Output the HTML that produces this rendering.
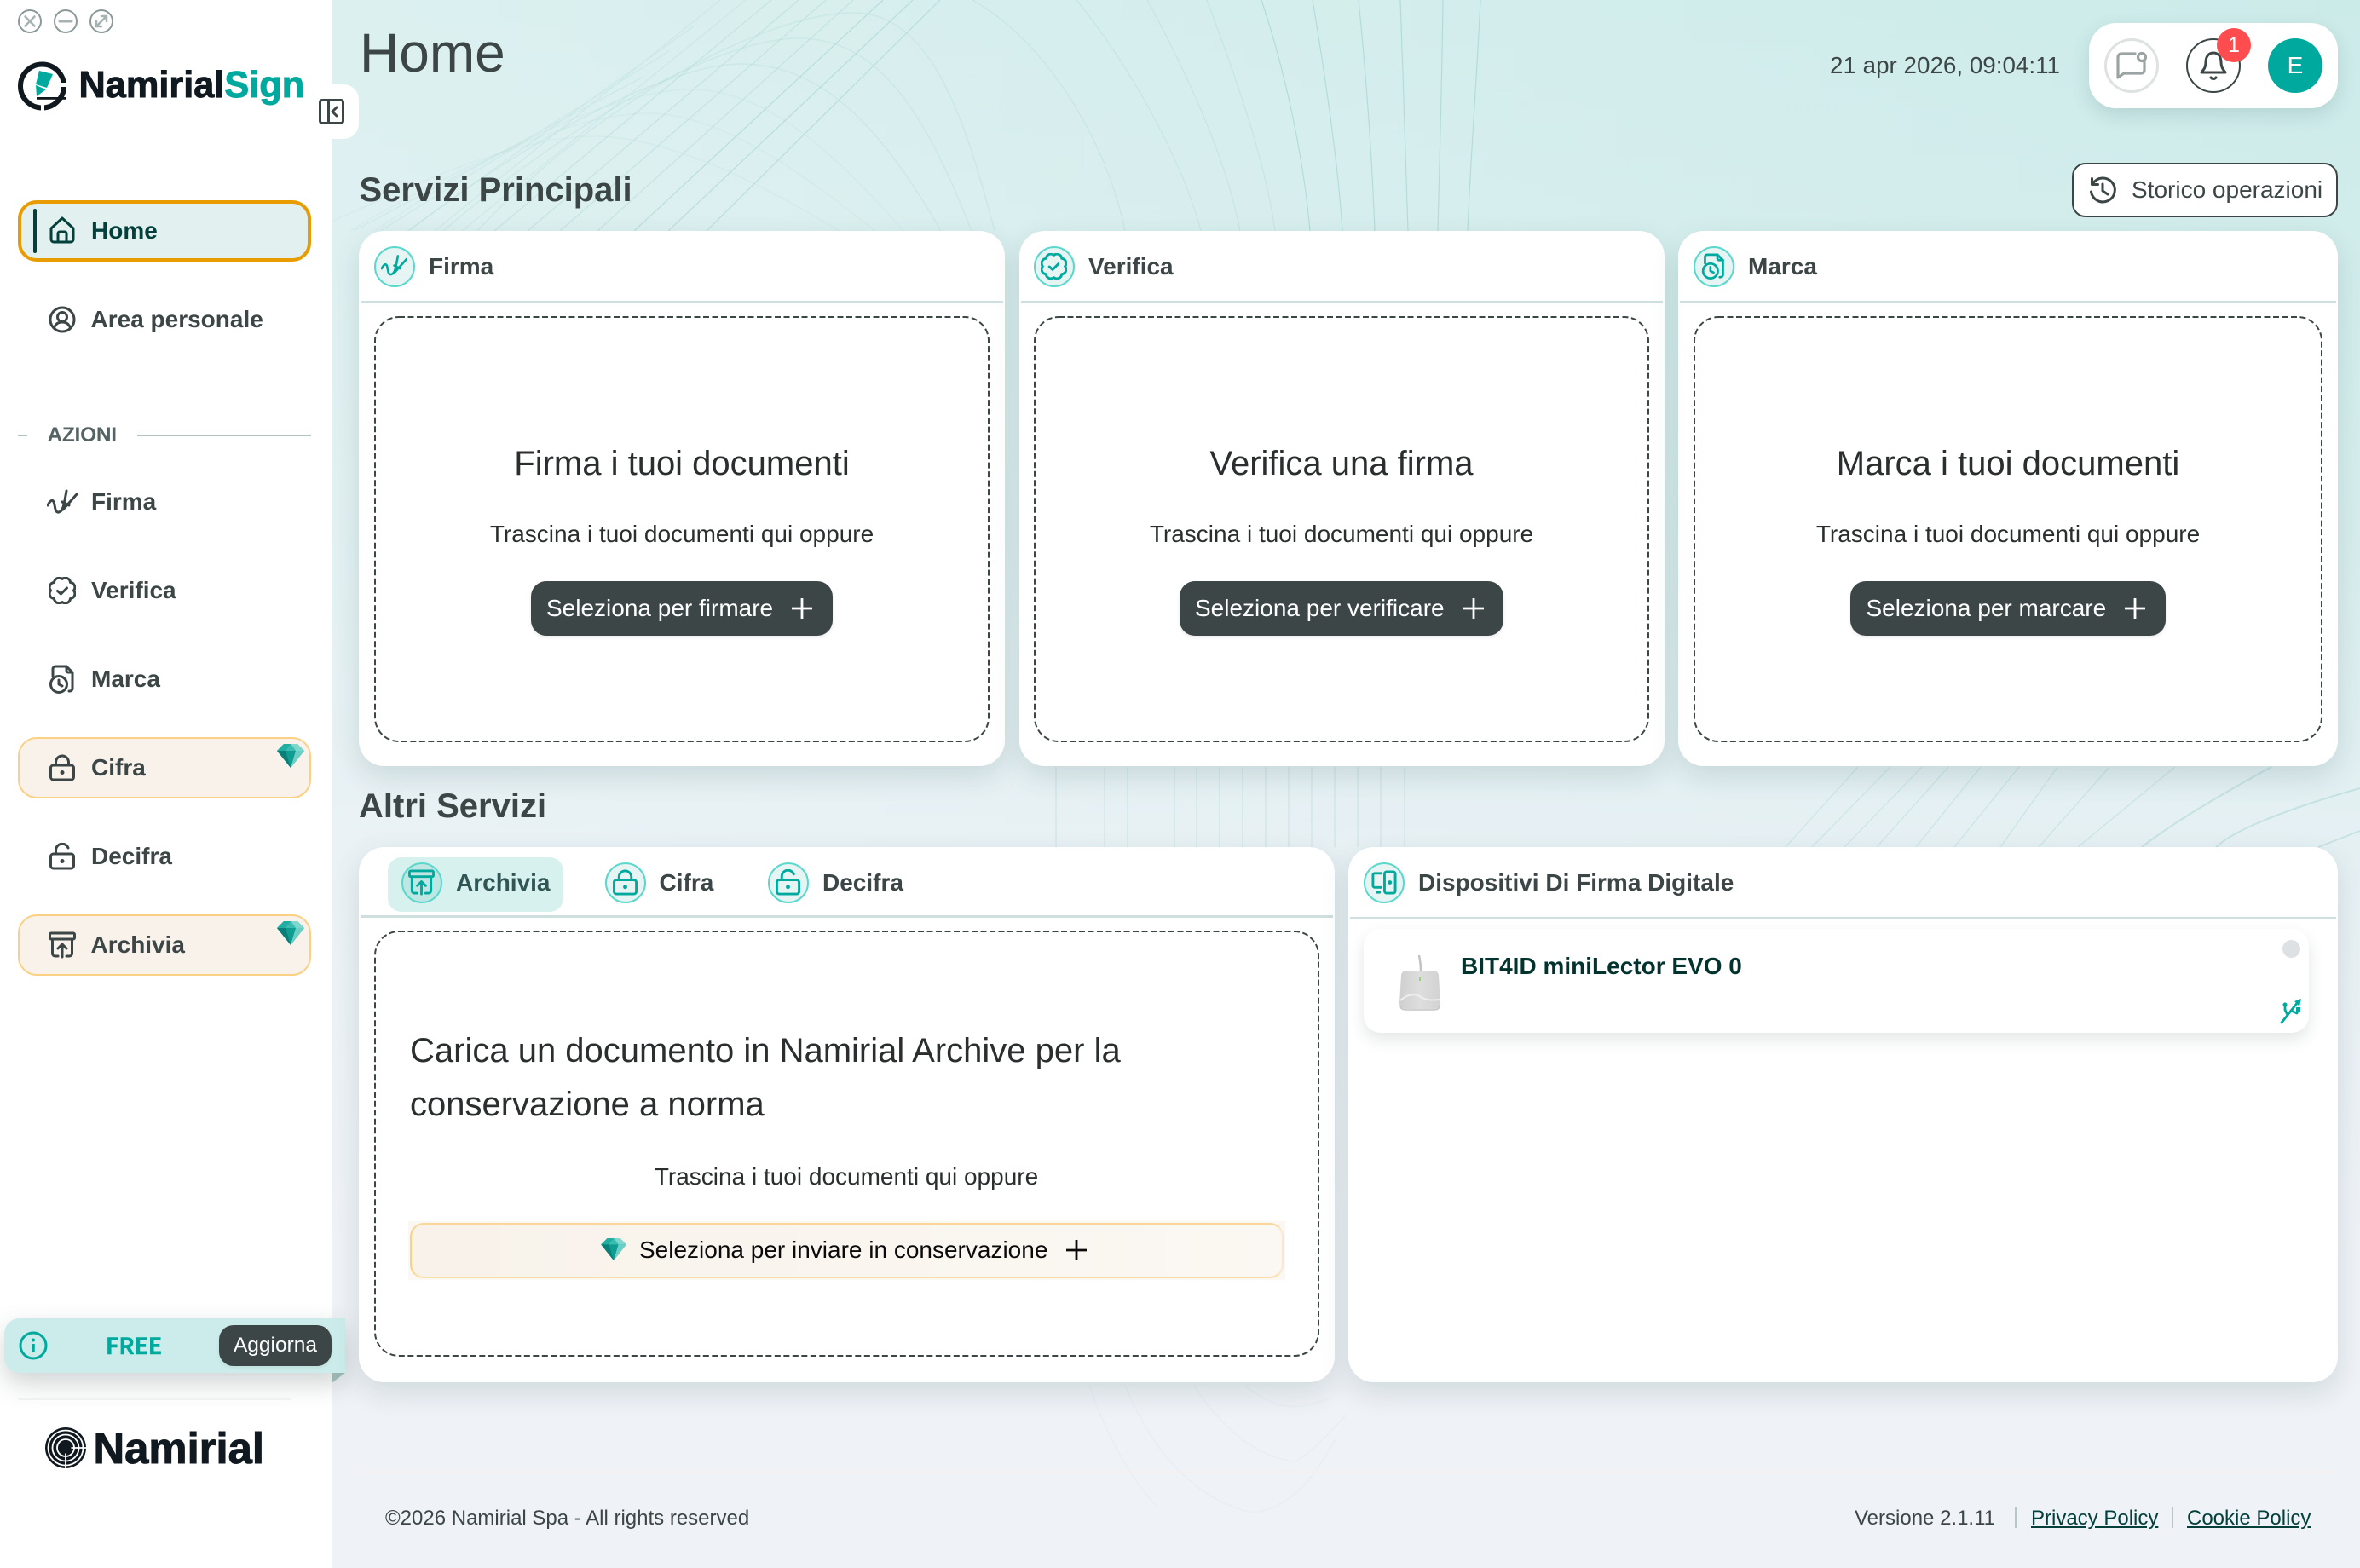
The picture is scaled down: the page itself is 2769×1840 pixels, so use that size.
<!DOCTYPE html>
<html lang="it"><head><meta charset="utf-8"><title>NamirialSign</title>
<style>
*{box-sizing:border-box}
html,body{margin:0;padding:0;width:2769px;height:1840px;overflow:hidden;background:#eff2f7;font-family:"Liberation Sans",Arial,sans-serif;color:#3c4646}
.a{position:absolute}
.t{position:absolute;white-space:nowrap;line-height:40px;height:40px;font-size:28px}
.b{font-weight:700}
.c{transform:translateX(-50%)}
#main{position:absolute;left:389px;top:0;width:2380px;height:1840px;background:linear-gradient(to bottom,rgba(239,242,247,0) 0,rgba(239,242,247,.35) 35%,rgba(239,242,247,.8) 58%,#eff2f7 80%),linear-gradient(to left,#cbebe9,#dcf0f0)}
#side{position:absolute;left:0;top:0;width:389px;height:1840px;background:#fff}
.nav{position:absolute;left:21px;width:344px;height:72px;border-radius:22px}
.prem{background:#f8f2ea;border:2px solid #fbd083}
.card{position:absolute;background:#fff;border-radius:30px;box-shadow:0 12px 32px rgba(30,70,70,.14)}
.line{position:absolute;height:3px;background:#cfdedf}
.btn{position:absolute;height:64px;background:#3c4646;border-radius:18px;box-shadow:0 2px 4px rgba(0,0,0,.08)}
.ci{position:absolute;width:48px;height:48px;border-radius:50%;background:#e6f5f3;border:2.5px solid #5ad8cc}
.ci svg{position:absolute;left:6px;top:6px;width:31px;height:31px;color:#00a99d}
svg{display:block;overflow:visible}
.ns{fill:none;stroke:currentColor;stroke-width:3;stroke-linecap:round;stroke-linejoin:round}
a{color:#03403c}
</style></head><body>

<svg width="0" height="0" style="position:absolute">
<defs>
<symbol id="i-home" viewBox="0 0 30 32"><g class="ns"><path d="M2 14 15 2l13 12v13a3 3 0 0 1-3 3H5a3 3 0 0 1-3-3Z"/><path d="M10 30V20a2 2 0 0 1 2-2h6a2 2 0 0 1 2 2v10"/></g></symbol>
<symbol id="i-user" viewBox="0 0 32 32"><g class="ns"><circle cx="16" cy="16" r="14"/><circle cx="16" cy="13" r="5.500"/><path d="M6.500 26c1.500-5 5-7 9.500-7s8 2 9.500 7"/></g></symbol>
<symbol id="i-firma" viewBox="0 0 36 32"><g class="ns"><path d="M1 19C3 15 6 11 8 15c2 5 1 13 6 12 5-1 6-8 9-25L19 24 35 6"/><path d="M18 15l8 4"/></g></symbol>
<symbol id="i-ver" viewBox="0 0 32 32"><g class="ns"><path d="M29.500 16A5.800 5.800 0 0 1 25.500 25.500 5.800 5.800 0 0 1 16 29.500 5.800 5.800 0 0 1 6.500 25.500 5.800 5.800 0 0 1 2.500 16 5.800 5.800 0 0 1 6.500 6.500 5.800 5.800 0 0 1 16 2.500 5.800 5.800 0 0 1 25.500 6.500 5.800 5.800 0 0 1 29.500 16Z"/><path d="M10.500 16.500l4 3.500 7-7"/></g></symbol>
<symbol id="i-marca" viewBox="0 0 32 34"><g class="ns"><path d="M5 13V5a3 3 0 0 1 3-3h13l7 7v19a3 3 0 0 1-3 3h-1"/><path d="M21 2v5a2 2 0 0 0 2 2h5"/><circle cx="12" cy="23" r="9.500"/><path d="M12 18v5l4 2"/></g></symbol>
<symbol id="i-lock" viewBox="0 0 30 32"><g class="ns"><rect x="1.500" y="13" width="27" height="17" rx="3"/><path d="M7.500 13V9.500a7.500 7.500 0 0 1 15 0V13"/></g><circle cx="15" cy="21.500" r="2.500" fill="currentColor"/></symbol>
<symbol id="i-unlock" viewBox="0 0 30 32"><g class="ns"><rect x="1.500" y="13" width="27" height="17" rx="3"/><path d="M7.500 13V8.500a7.500 7.500 0 0 1 14.500-2.500"/></g><circle cx="15" cy="21.500" r="2.500" fill="currentColor"/></symbol>
<symbol id="i-arch" viewBox="0 0 32 32"><g class="ns"><rect x="1.500" y="2" width="29" height="7" rx="1.500"/><path d="M4.500 9v17a3 3 0 0 0 3 3H11M27.500 9v17a3 3 0 0 1-3 3H21"/><path d="M16 30V15M11 20l5-5 5 5"/></g></symbol>
<symbol id="i-dev" viewBox="0 0 32 32"><g class="ns"><path d="M13 5H5a2 2 0 0 0-2 2v13a2 2 0 0 0 2 2h8"/><path d="M8 28h3"/><rect x="17" y="3" width="13" height="26" rx="2.500"/></g><circle cx="23.500" cy="16" r="2.500" fill="currentColor"/></symbol>
<symbol id="i-gem" viewBox="0 0 32 28"><polygon points="0,8 8,0 24,0 32,8 16,28" fill="#0f9d92"/><polygon points="8,0 16,0 10,8 0,8" fill="#22ada2"/><polygon points="16,0 24,0 32,8 22,8" fill="#7fd6cd"/><polygon points="10,8 22,8 16,0" fill="#3bbcb0"/><polygon points="0,8 10,8 16,28" fill="#0a7f77"/><polygon points="22,8 32,8 16,28" fill="#6ccfc5"/></symbol>
</defs>
</svg>

<div id="main">
<svg width="2380" height="1840" viewBox="389 0 2380 1840" style="position:absolute;left:0;top:0;opacity:.6" fill="none" stroke="#8fcac4" stroke-width="1.200">
<g stroke-opacity=".75"><path d="M1103 0 829 271M1071 0 784 271M1036 0 744 271"/></g>
<g stroke-opacity=".5"><path d="M1001 0 701 271M969 0 657 271M937 0 619 271M905 0 580 271"/></g>
<g stroke-opacity=".32"><path d="M875 0 542 271M845 0 510 271M815 30 478 271M785 60 446 271M755 90 415 271"/></g>
<g stroke-opacity=".3" stroke-width="1.500"><path d="M560 271C700 120 900 15 1001 15 1090 15 1130 130 1167 271"/><path d="M520 271C660 150 840 45 937 45 1030 45 1085 130 1140 271"/><path d="M480 271C610 170 780 75 870 75 970 75 1040 160 1104 271"/></g>
<g stroke-opacity=".18" stroke-width="1.500"><path d="M440 271C570 180 720 105 810 105 900 105 980 180 1060 271"/><path d="M410 271C530 200 670 133 760 133 850 133 950 210 1027 271"/><path d="M389 260C500 210 610 160 695 160 790 160 900 220 985 271"/></g>
<g stroke-opacity=".4"><path d="M1141 0C1230 50 1300 170 1320 271"/><path d="M1263 0C1320 70 1385 180 1409 271"/><path d="M1346 0C1395 90 1440 190 1455 271"/><path d="M1416 0C1450 90 1485 190 1496 271"/></g>
<g stroke-opacity=".8"><path d="M1480 0C1510 90 1530 190 1537 271"/><path d="M1540 0C1555 90 1570 190 1575 271"/><path d="M1594 0C1603 90 1610 190 1613 271"/><path d="M1643 0C1646 90 1650 190 1652 271"/><path d="M1693 0C1692 90 1689 190 1687 271"/><path d="M1737 0C1733 90 1725 190 1722 271"/></g>
<g stroke-opacity=".5"><path d="M1239 900V994M1296 900V994M1323 900V994M1378 900V994M1404 900V994M1431 900V994M1458 900V994M1485 900V994M1512 900V994M1539 900V994M1566 900V994M1593 900V994M1620 900V994M1648 900V994"/></g>
<g stroke-opacity=".5"><path d="M2180 900 2095 994M2218 900 2126 994M2255 900 2164 994M2286 900 2202 994M2324 900 2248 994M2369 900 2293 994M2414 900 2347 994M2475 900 2392 994M2552 900 2438 994"/></g>
<g stroke-opacity=".6" stroke-width="2"><path d="M2665 900C2610 930 2550 965 2513 994"/><path d="M2769 925C2680 950 2620 975 2600 994"/><path d="M2769 975 2720 994"/></g>
<g stroke-opacity=".14" stroke-width="1.500"><path d="M1278 1625C1300 1690 1330 1740 1360 1770"/><path d="M1320 1625C1350 1700 1400 1760 1470 1775 1520 1770 1550 1720 1566 1690"/><path d="M1400 1625C1430 1670 1470 1710 1520 1715 1545 1700 1560 1680 1580 1660"/><path d="M1460 1625C1490 1650 1520 1660 1560 1640"/></g>
</svg>
</div>
<div class="a" style="left:421px;top:1726px;width:2320px;height:2px;background:#f4f0ef"></div>

<div id="side"></div>

<!-- collapse tab -->
<div class="a" style="left:389px;top:99px;width:32px;height:64px;background:#fff;border-radius:0 18px 18px 0"></div>
<svg class="a" style="left:374px;top:116px" width="30" height="30" viewBox="0 0 30 30" fill="none" stroke="#3c4646" stroke-width="3" stroke-linejoin="round" stroke-linecap="round"><rect x="1.500" y="1.500" width="27" height="27" rx="2.500"/><path d="M11.500 1.500v27M21 10l-5 5 5 5"/></svg>

<!-- window controls -->
<svg class="a" style="left:20px;top:10px" width="116" height="30" viewBox="0 0 116 30" fill="none" stroke="#8b9a9a" stroke-width="2"><circle cx="15" cy="15" r="13"/><path d="M9.500 9.500l11 11M20.500 9.500l-11 11" stroke="#a7b3b3" stroke-width="2.500" stroke-linecap="round"/><circle cx="57" cy="15" r="13"/><path d="M50 15h14" stroke="#a7b3b3" stroke-width="3" stroke-linecap="round"/><circle cx="99" cy="15" r="13"/><path d="M93 21l12-12M99 9h6v6M93 15v6h6" stroke="#a7b3b3" stroke-width="2.500" stroke-linecap="round"/></svg>

<!-- logo -->
<svg class="a" style="left:21px;top:73px" width="58" height="57" viewBox="0 0 58 57" fill="none"><circle cx="28.500" cy="28" r="25.500" stroke="#101820" stroke-width="6"/><rect x="50" y="24" width="9" height="5" fill="#fff"/><rect x="27" y="50" width="4" height="8" fill="#fff"/><polygon points="25,10 41,14 34,30 21,26" fill="#00a99d"/><polygon points="21,27 33,32 22,40" fill="#00a99d"/><rect x="22" y="41" width="35" height="2.800" fill="#101820"/></svg>
<div class="t b" style="left:92.500px;top:80px;height:40px;font-size:43.300px;color:#101820;-webkit-text-stroke:.9px #101820">Namirial<span style="color:#00a99d;-webkit-text-stroke:.9px #00a99d">Sign</span></div>

<!-- nav -->
<div class="nav" style="top:235px;background:#e2f1f0;border:4px solid #e89c00"></div>
<div class="a" style="left:39px;top:245px;width:4px;height:52px;background:#03403c;border-radius:2px"></div>
<svg class="a" style="left:58px;top:254px;color:#03403c" width="30" height="32"><use href="#i-home"/></svg>
<div class="t b" style="left:107px;top:251px;color:#03403c">Home</div>

<svg class="a" style="left:57px;top:359px;color:#3c4646" width="32" height="32"><use href="#i-user"/></svg>
<div class="t b" style="left:106.500px;top:355px">Area personale</div>

<div class="a" style="left:21px;top:510px;width:11px;height:2px;background:#b2c4c2"></div>
<div class="t b" style="left:55.500px;top:490.500px;font-size:24.500px;color:#566365;letter-spacing:-.3px">AZIONI</div>
<div class="a" style="left:161px;top:510px;width:204px;height:2px;background:#b2c4c2"></div>

<svg class="a" style="left:55px;top:574px;color:#3c4646" width="36" height="32"><use href="#i-firma"/></svg>
<div class="t b" style="left:107px;top:569px">Firma</div>
<svg class="a" style="left:57px;top:677px;color:#3c4646" width="32" height="32"><use href="#i-ver"/></svg>
<div class="t b" style="left:107px;top:673px">Verifica</div>
<svg class="a" style="left:57px;top:780px;color:#3c4646" width="32" height="34"><use href="#i-marca"/></svg>
<div class="t b" style="left:107px;top:777px">Marca</div>

<div class="nav prem" style="top:865px"></div>
<svg class="a" style="left:58px;top:885px;color:#3c4646" width="30" height="32"><use href="#i-lock"/></svg>
<div class="t b" style="left:107px;top:881px">Cifra</div>
<svg class="a" style="left:325px;top:873px" width="32" height="28"><use href="#i-gem"/></svg>

<svg class="a" style="left:58px;top:989px;color:#3c4646" width="30" height="32"><use href="#i-unlock"/></svg>
<div class="t b" style="left:107px;top:985px">Decifra</div>

<div class="nav prem" style="top:1073px"></div>
<svg class="a" style="left:57px;top:1093px;color:#3c4646" width="32" height="32"><use href="#i-arch"/></svg>
<div class="t b" style="left:106.500px;top:1089px">Archivia</div>
<svg class="a" style="left:325px;top:1081px" width="32" height="28"><use href="#i-gem"/></svg>

<!-- free bar -->
<div class="a" style="left:5px;top:1547px;width:400px;height:64px;background:#cbecea;border-radius:18px 0 0 18px;box-shadow:0 12px 30px rgba(40,60,60,.22)"></div>
<svg class="a" style="left:389px;top:1611px" width="16" height="12"><polygon points="0,0 16,0 0,12" fill="#9ab5b2"/></svg>
<svg class="a" style="left:22px;top:1562px" width="34" height="34" viewBox="0 0 34 34" fill="none" stroke="#00a99d" stroke-width="3"><circle cx="17" cy="17" r="15"/><path d="M17 15v9" stroke-width="3.500"/><circle cx="17" cy="10.500" r="2" fill="#00a99d" stroke="none"/></svg>
<div class="t" style="left:124px;top:1558px;font-family:'Noto Sans CJK SC','Liberation Sans',sans-serif;font-weight:700;font-size:26.500px;color:#00a99d;-webkit-text-stroke:.5px #00a99d">FREE</div>
<div class="a" style="left:257px;top:1555px;width:132px;height:48px;background:#3c4646;border-radius:17px;box-shadow:0 2px 4px rgba(0,0,0,.06)"></div>
<div class="t c" style="left:323px;top:1559px;font-size:24.500px;color:#fff">Aggiorna</div>
<div class="a" style="left:21px;top:1641px;width:321px;height:2px;background:#f0f2f2"></div>

<svg class="a" style="left:53px;top:1675px" width="48" height="48" viewBox="0 0 48 48" fill="none"><circle cx="24" cy="24" r="24" fill="#101820"/><g stroke="#fff" stroke-width="1.800"><circle cx="24" cy="24" r="20.500"/><circle cx="24" cy="24" r="15.500"/><circle cx="24" cy="24" r="10"/><path d="M24 24H48M24 24V48"/></g><circle cx="24" cy="24" r="6.500" fill="#101820"/></svg>
<div class="t b" style="left:109.500px;top:1670px;height:60px;line-height:60px;font-size:50.800px;color:#101820;-webkit-text-stroke:1px #101820">Namirial</div>

<!-- header -->
<div class="t" style="left:422px;top:22px;height:80px;line-height:80px;font-size:64px">Home</div>
<div class="t" style="left:2147px;top:57px;font-size:27.800px">21 apr 2026, 09:04:11</div>

<div class="a" style="left:2451px;top:27px;width:292px;height:100px;background:#fff;border-radius:32px;box-shadow:0 8px 22px rgba(30,70,70,.14)"></div>
<div class="a" style="left:2469px;top:45px;width:64px;height:64px;border-radius:50%;border:3px solid #dfe2e2"></div>
<svg class="a" style="left:2483px;top:60px" width="36" height="34" viewBox="0 0 36 34" fill="none" stroke="#9ba3a3" stroke-width="3.200" stroke-linecap="round" stroke-linejoin="round"><path d="M22 3H6a4 4 0 0 0-4 4v24l7-5h21a4 4 0 0 0 3-3V13"/><circle cx="30" cy="7" r="4.500"/></svg>
<div class="a" style="left:2565px;top:45px;width:64px;height:64px;border-radius:50%;border:2px solid #3c4646"></div>
<svg class="a" style="left:2581px;top:60px" width="32" height="36" viewBox="0 0 32 36" fill="none" stroke="#3c4646" stroke-width="3" stroke-linecap="round" stroke-linejoin="round"><path d="M16 2c-6 0-9 5-9 11 0 7-3 9-5 12h28c-2-3-5-5-5-12 0-6-3-11-9-11Z"/><path d="M13 31c1.500 2 4.500 2 6 0"/></svg>
<div class="a" style="left:2601px;top:33px;width:40px;height:40px;border-radius:50%;background:#ff4d4f"></div>
<div class="t c" style="left:2621px;top:33px;font-size:25px;color:#fff">1</div>
<div class="a" style="left:2661px;top:45px;width:64px;height:64px;border-radius:50%;background:#00a99d"></div>
<div class="t c" style="left:2693px;top:57px;font-size:28px;color:#fff">E</div>

<div class="t b" style="left:421.500px;top:203px;font-size:40px">Servizi Principali</div>

<div class="a" style="left:2431px;top:191px;width:312px;height:64px;background:#fff;border:2px solid #3c4646;border-radius:16px"></div>
<svg class="a" style="left:2451px;top:207px" width="32" height="32" viewBox="0 0 32 32" fill="none" stroke="#3c4646" stroke-width="3" stroke-linecap="round" stroke-linejoin="round"><path d="M4.500 8.500A14 14 0 1 1 2.500 18"/><path d="M3.500 2.500v7h7"/><path d="M16 9v8l6 4"/></svg>
<div class="t" style="left:2501px;top:203px;font-size:28px">Storico operazioni</div>

<!-- cards -->
<div class="card" style="left:421px;top:271px;width:758px;height:628px"></div>
<div class="card" style="left:1196px;top:271px;width:757px;height:628px"></div>
<div class="card" style="left:1969px;top:271px;width:774px;height:628px"></div>
<div class="line" style="left:423px;top:353px;width:754px"></div>
<div class="line" style="left:1198px;top:353px;width:753px"></div>
<div class="line" style="left:1971px;top:353px;width:770px"></div>

<div class="ci" style="left:439px;top:289px"><svg viewBox="0 0 36 32"><use href="#i-firma"/></svg></div>
<div class="t b" style="left:503px;top:293px">Firma</div>
<div class="ci" style="left:1213px;top:289px"><svg viewBox="0 0 32 32"><use href="#i-ver"/></svg></div>
<div class="t b" style="left:1277px;top:293px">Verifica</div>
<div class="ci" style="left:1987px;top:289px"><svg viewBox="0 0 32 34"><use href="#i-marca"/></svg></div>
<div class="t b" style="left:2051px;top:293px">Marca</div>

<svg class="a" style="left:439px;top:371px" width="722" height="500" fill="none"><rect x="1" y="1" width="720" height="498" rx="28" stroke="#3c4646" stroke-width="2" stroke-dasharray="7 3.500"/></svg>
<svg class="a" style="left:1213px;top:371px" width="722" height="500" fill="none"><rect x="1" y="1" width="720" height="498" rx="28" stroke="#3c4646" stroke-width="2" stroke-dasharray="7 3.500"/></svg>
<svg class="a" style="left:1987px;top:371px" width="738" height="500" fill="none"><rect x="1" y="1" width="736" height="498" rx="28" stroke="#3c4646" stroke-width="2" stroke-dasharray="7 3.500"/></svg>

<div class="t c" style="left:800px;top:524px;font-size:40px;color:#2a2e2e">Firma i tuoi documenti</div>
<div class="t c" style="left:1574px;top:524px;font-size:40px;color:#2a2e2e">Verifica una firma</div>
<div class="t c" style="left:2356px;top:524px;font-size:40px;color:#2a2e2e">Marca i tuoi documenti</div>

<div class="t c" style="left:800px;top:607px;color:#2a2e2e">Trascina i tuoi documenti qui oppure</div>
<div class="t c" style="left:1574px;top:607px;color:#2a2e2e">Trascina i tuoi documenti qui oppure</div>
<div class="t c" style="left:2356px;top:607px;color:#2a2e2e">Trascina i tuoi documenti qui oppure</div>

<div class="btn" style="left:623px;top:682px;width:354px"></div>
<div class="t" style="left:641px;top:694px;color:#fff">Seleziona per firmare</div>
<svg class="a" style="left:929px;top:702px" width="24" height="24" stroke="#fff" stroke-width="2.800"><path d="M12 0v24M0 12h24"/></svg>
<div class="btn" style="left:1384px;top:682px;width:380px"></div>
<div class="t" style="left:1402px;top:694px;color:#fff">Seleziona per verificare</div>
<svg class="a" style="left:1717px;top:702px" width="24" height="24" stroke="#fff" stroke-width="2.800"><path d="M12 0v24M0 12h24"/></svg>
<div class="btn" style="left:2171px;top:682px;width:370px"></div>
<div class="t" style="left:2189.500px;top:694px;color:#fff">Seleziona per marcare</div>
<svg class="a" style="left:2493px;top:702px" width="24" height="24" stroke="#fff" stroke-width="2.800"><path d="M12 0v24M0 12h24"/></svg>

<div class="t b" style="left:421px;top:926px;font-size:40px">Altri Servizi</div>

<!-- bottom left card -->
<div class="card" style="left:421px;top:994px;width:1145px;height:628px"></div>
<div class="line" style="left:423px;top:1074px;width:1141px"></div>
<div class="a" style="left:455px;top:1006px;width:206px;height:64px;background:#d7f2ee;border-radius:16px"></div>
<div class="ci" style="left:471px;top:1012px;background:#bfe6e2"><svg viewBox="0 0 32 32"><use href="#i-arch"/></svg></div>
<div class="t b" style="left:535px;top:1016px;color:#2f5654">Archivia</div>
<div class="ci" style="left:710px;top:1012px"><svg viewBox="0 0 30 32"><use href="#i-lock"/></svg></div>
<div class="t b" style="left:773.500px;top:1016px">Cifra</div>
<div class="ci" style="left:901px;top:1012px"><svg viewBox="0 0 30 32"><use href="#i-unlock"/></svg></div>
<div class="t b" style="left:965px;top:1016px">Decifra</div>

<svg class="a" style="left:439px;top:1092px" width="1109" height="500" fill="none"><rect x="1" y="1" width="1107" height="498" rx="28" stroke="#3c4646" stroke-width="2" stroke-dasharray="7 3.500"/></svg>
<div class="t" style="left:481px;top:1213px;font-size:40px;color:#2a2e2e">Carica un documento in Namirial Archive per la</div>
<div class="t" style="left:481px;top:1276px;font-size:40px;color:#2a2e2e">conservazione a norma</div>
<div class="t c" style="left:993px;top:1361px;color:#2a2e2e">Trascina i tuoi documenti qui oppure</div>

<div class="a" style="left:479px;top:1433px;width:1029px;height:69px;background:#fbf8f4"></div>
<div class="a" style="left:481px;top:1435px;width:1025px;height:65px;border-radius:16px;border:2px solid;border-color:#fbd698 #fbe8cc #fbdda8 #fbd083;background:linear-gradient(to right,#f8f2ea,#fbf8f3)"></div>
<svg class="a" style="left:705px;top:1453px" width="30" height="26" viewBox="0 0 32 28"><use href="#i-gem"/></svg>
<div class="t" style="left:750px;top:1447px;color:#0a0a0a">Seleziona per inviare in conservazione</div>
<svg class="a" style="left:1251px;top:1455px" width="24" height="24" stroke="#0a0a0a" stroke-width="2.800"><path d="M12 0v24M0 12h24"/></svg>

<!-- bottom right card -->
<div class="card" style="left:1582px;top:994px;width:1161px;height:628px"></div>
<div class="line" style="left:1584px;top:1076px;width:1157px"></div>
<div class="ci" style="left:1600px;top:1012px"><svg viewBox="0 0 32 32"><use href="#i-dev"/></svg></div>
<div class="t b" style="left:1664px;top:1016px">Dispositivi Di Firma Digitale</div>

<div class="a" style="left:1600px;top:1090px;width:1109px;height:122px;background:#fff;border-radius:20px;box-shadow:0 8px 18px rgba(30,60,60,.12)"></div>
<svg class="a" style="left:1640px;top:1120px" width="52" height="66" viewBox="0 0 52 66" fill="none"><defs><linearGradient id="dg" x1="0" y1="0" x2="1" y2="0"><stop offset="0" stop-color="#cfcfcf"/><stop offset=".5" stop-color="#dedede"/><stop offset="1" stop-color="#d2d2d2"/></linearGradient></defs><path d="M25 1c1 6 2 10 2 18" stroke="#c2c4c4" stroke-width="2.500"/><path d="M4 25a6 6 0 0 1 6-6h32a6 6 0 0 1 6 6l2 32a7 7 0 0 1-7 7H9a7 7 0 0 1-7-7Z" fill="url(#dg)"/><path d="M3 54c8-7 17-9 24-4 7 4 14 4 22 3" stroke="#eeeeee" stroke-width="2"/><path d="M3 60q0 5 7 5h32q7 0 7-5" stroke="#c4c4c4" stroke-width="1.500"/><rect x="25" y="27" width="2" height="4" fill="#8ddc6a"/></svg>
<div class="t b" style="left:1714px;top:1114px;color:#03332f">BIT4ID miniLector EVO 0</div>
<div class="a" style="left:2678px;top:1103px;width:21px;height:21px;border-radius:50%;background:#dde1e3"></div>
<svg class="a" style="left:2673px;top:1171px" width="30" height="30" viewBox="0 0 30 30" fill="none" stroke="#00a99d" stroke-width="2.800" stroke-linecap="round" stroke-linejoin="round"><path d="M4 29 23 5"/><polygon points="27,1 19,4 25,10" fill="#00a99d" stroke="none"/><path d="M11 20 8 14V10"/><circle cx="8" cy="8" r="2.500" fill="#00a99d" stroke="none"/><path d="M15 15l7 3 1-3"/><rect x="21" y="11" width="5" height="5" fill="#00a99d" stroke="none"/></svg>

<!-- footer -->
<div class="t" style="left:452px;top:1762px;font-size:24px">©2026 Namirial Spa - All rights reserved</div>
<div class="t" style="left:2176px;top:1762px;font-size:24px">Versione 2.1.11</div>
<div class="a" style="left:2364px;top:1768px;width:2px;height:25px;background:#b7c6c6"></div>
<div class="t" style="left:2383px;top:1762px;font-size:24px"><a href="#" style="color:#03403c">Privacy Policy</a></div>
<div class="a" style="left:2548px;top:1768px;width:2px;height:25px;background:#b7c6c6"></div>
<div class="t" style="left:2566px;top:1762px;font-size:24px"><a href="#" style="color:#03403c">Cookie Policy</a></div>

</body></html>
